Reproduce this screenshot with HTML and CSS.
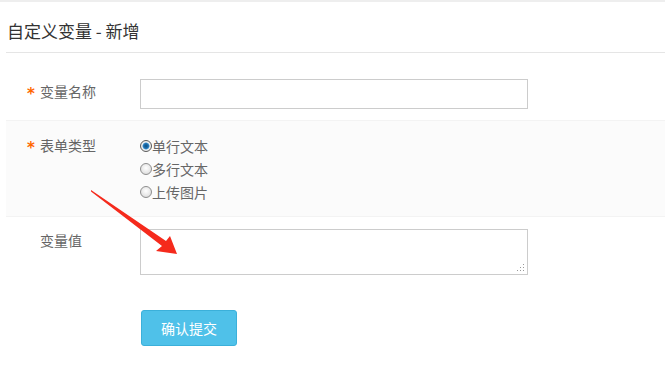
FILE: index.html
```html
<!DOCTYPE html>
<html lang="zh-CN">
<head>
<meta charset="utf-8">
<title>自定义变量 - 新增</title>
<link rel="stylesheet" href="styles.css">
</head>
<body>
<div class="topbar"></div>
<div class="page">
  <h1 class="title">自定义变量 - 新增</h1>
  <form class="form">
    <div class="row row-name">
      <label class="label"><span class="req">*</span>变量名称</label>
      <div class="field"><input class="input" type="text"></div>
    </div>
    <div class="row row-type">
      <label class="label"><span class="req">*</span>表单类型</label>
      <div class="field radios">
        <label class="radio"><input type="radio" name="t" checked><span>单行文本</span></label>
        <label class="radio"><input type="radio" name="t"><span>多行文本</span></label>
        <label class="radio"><input type="radio" name="t"><span>上传图片</span></label>
      </div>
    </div>
    <div class="row row-value">
      <label class="label"><span class="req"></span>变量值</label>
      <div class="field">
        <div class="ta-wrap">
          <textarea class="textarea"></textarea>
          <svg class="grip" width="8" height="8" viewBox="0 0 8 8">
            <rect x="6" y="0" width="1" height="1" fill="#999"/>
            <rect x="3" y="3" width="1" height="1" fill="#999"/>
            <rect x="6" y="3" width="1" height="1" fill="#999"/>
            <rect x="0" y="6" width="1" height="1" fill="#999"/>
            <rect x="3" y="6" width="1" height="1" fill="#999"/>
            <rect x="6" y="6" width="1" height="1" fill="#999"/>
          </svg>
        </div>
      </div>
    </div>
    <div class="actions">
      <button class="btn" type="button">确认提交</button>
    </div>
  </form>
</div>
<svg class="arrow" width="665" height="371" viewBox="0 0 665 371">
  <polygon points="91,190 166,241 170,236 177,254 156,251 162,246 91,191.5" fill="#f52a1c"/>
</svg>
</body>
</html>
```
FILE: styles.css
```css
html, body {
  margin: 0;
  padding: 0;
  background: #fff;
}
body {
  font-family: "Microsoft YaHei", "Noto Sans CJK SC", "Noto Sans", sans-serif;
  color: #666;
  position: relative;
  width: 665px;
  height: 371px;
  overflow: hidden;
}
.topbar {
  height: 2px;
  background: #eeeeee;
}
.page {
  padding-left: 6px;
}
.title {
  margin: 0;
  padding: 18px 0 10px 1px;
  font-size: 17px;
  line-height: 22px;
  font-weight: normal;
  color: #333;
  border-bottom: 1px solid #e5e5e5;
}
.form {
  margin: 0;
}
.row {
  display: flex;
  align-items: flex-start;
}
.label {
  width: 134px;
  box-sizing: border-box;
  padding-left: 21px;
  font-size: 14px;
  color: #666;
  display: flex;
}
.req {
  width: 13px;
  color: #f60;
  font-family: "DejaVu Sans", sans-serif;
  font-size: 15px;
  font-weight: bold;
  padding-top: 3px;
  box-sizing: border-box;
}
.field {
  flex: 1;
}
.row-name {
  padding: 26px 0 11px;
}
.row-name .label {
  line-height: 24px;
}
.input {
  display: block;
  width: 388px;
  height: 30px;
  box-sizing: border-box;
  border: 1px solid #ccc;
  margin: 0;
  padding: 0 6px;
  font-size: 14px;
  outline: none;
}
.row-type {
  background: #fbfbfb;
  border-top: 1px solid #f3f3f3;
  border-bottom: 1px solid #f3f3f3;
  padding: 13px 0 13px;
}
.row-type .label {
  line-height: 23px;
}
.radios {
  display: flex;
  flex-direction: column;
}
.radio {
  display: flex;
  align-items: center;
  height: 23px;
  font-size: 14px;
  color: #666;
}
.radio input {
  appearance: none;
  -webkit-appearance: none;
  width: 12px;
  height: 12px;
  margin: 0;
  border-radius: 50%;
  border: 1px solid #8e8e8e;
  box-sizing: border-box;
  background: radial-gradient(circle at 50% 40%, #ffffff 0%, #e6e6e6 60%, #cfcfcf 100%);
  flex: none;
}
.radio input:checked {
  background: radial-gradient(circle at 50% 50%, #0d4d7e 0%, #1e73b5 35%, #5aa2d6 45%, #f2f2f2 55%, #d8d8d8 100%);
  border-color: #5a5a5a;
}
.row-value {
  padding: 12px 0 0;
}
.row-value .label {
  line-height: 22px;
}
.ta-wrap {
  position: relative;
  width: 388px;
}
.textarea {
  display: block;
  width: 388px;
  height: 46px;
  box-sizing: border-box;
  border: 1px solid #ccc;
  margin: 0;
  padding: 4px 6px;
  font-family: inherit;
  font-size: 14px;
  resize: none;
  outline: none;
}
.grip {
  position: absolute;
  right: 3px;
  bottom: 3px;
}
.actions {
  padding: 35px 0 0 135px;
}
.btn {
  width: 96px;
  height: 36px;
  margin: 0;
  padding: 0;
  background: #4fc1e9;
  border: 1px solid #3bb0da;
  border-radius: 3px;
  color: #fff;
  font-family: inherit;
  font-size: 14px;
  cursor: pointer;
}
.arrow {
  position: absolute;
  left: 0;
  top: 0;
  pointer-events: none;
}
```
